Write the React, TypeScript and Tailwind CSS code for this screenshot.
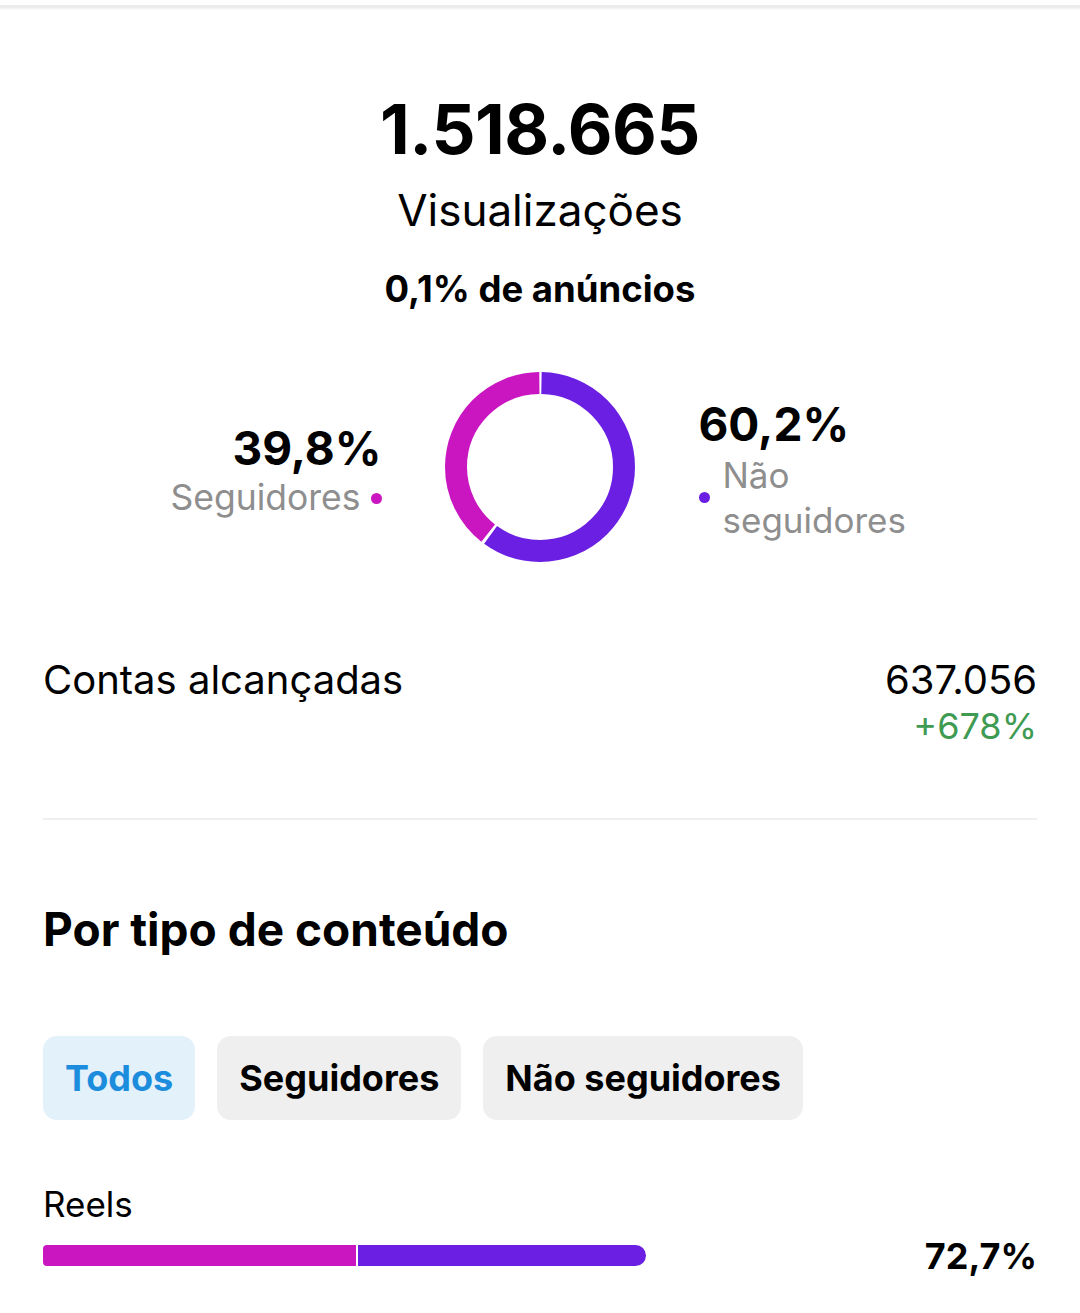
import React from 'react';

const MAGENTA = '#c916c0';
const PURPLE = '#6b1fe2';

function Donut({ followers }: { followers: number }) {
  const r = 84;
  const c = 2 * Math.PI * r;
  const gap = 3;
  const purpleLen = (1 - followers) * c;
  const magentaLen = followers * c;
  return (
    <svg width="192" height="192" viewBox="0 0 192 192" className="shrink-0">
      <g transform="rotate(-90 96 96)">
        <circle
          cx="96"
          cy="96"
          r={r}
          fill="none"
          stroke={PURPLE}
          strokeWidth="22"
          strokeDasharray={`${purpleLen - gap} ${c}`}
          strokeDashoffset={-gap / 2}
        />
        <circle
          cx="96"
          cy="96"
          r={r}
          fill="none"
          stroke={MAGENTA}
          strokeWidth="22"
          strokeDasharray={`${magentaLen - gap} ${c}`}
          strokeDashoffset={-(purpleLen + gap / 2)}
        />
      </g>
    </svg>
  );
}

const TABS = ['Todos', 'Seguidores', 'Não seguidores'];

export default function App() {
  return (
    <div className="w-[1080px] min-h-[1313px] bg-white text-black font-['Inter',sans-serif] overflow-hidden">
      <div className="mt-[5px] h-[3px] bg-[#ececec] shadow-[0_1px_2px_rgba(0,0,0,0.06)]" />

      <div className="px-[43px]">
        {/* Header */}
        <div className="flex flex-col items-center">
          <div className="mt-[87px] text-[69px] font-bold leading-none tracking-[-0.5px]">1.518.665</div>
          <div className="mt-[24px] text-[44px] leading-none">Visualizações</div>
          <div className="mt-[39px] text-[36.5px] font-bold leading-none">0,1% de anúncios</div>
        </div>

        {/* Followers split */}
        <div className="mt-[63px] flex items-center">
          <div className="flex-1 flex justify-end pr-[62px]">
            <div className="flex flex-col items-end pt-[8px]">
              <div className="text-[46px] font-bold leading-none">39,8%</div>
              <div className="mt-[9px] flex items-center gap-[10px]">
                <span className="text-[35.5px] leading-none text-[#8e8e8e]">Seguidores</span>
                <span className="w-[11px] h-[11px] rounded-full bg-[#c916c0]" />
              </div>
            </div>
          </div>
          <Donut followers={0.398} />
          <div className="flex-1 flex justify-start pl-[63px]">
            <div className="flex flex-col items-start pt-[10px]">
              <div className="text-[46px] font-bold leading-none">60,2%</div>
              <div className="mt-[6px] flex items-center gap-[13px]">
                <span className="w-[11px] h-[11px] rounded-full bg-[#6b1fe2]" />
                <span className="text-[35px] leading-[45px] text-[#8e8e8e]">
                  Não
                  <br />
                  seguidores
                </span>
              </div>
            </div>
          </div>
        </div>

        {/* Reached accounts */}
        <div className="mt-[97px] flex justify-between items-start">
          <div className="text-[40px] leading-none">Contas alcançadas</div>
          <div className="flex flex-col items-end">
            <div className="text-[40px] leading-none">637.056</div>
            <div className="mt-[8px] text-[36px] leading-none text-[#3f9a52]">+678%</div>
          </div>
        </div>

        <div className="mt-[74px] h-[2px] bg-[#efefef]" />

        {/* By content type */}
        <div className="mt-[86px] text-[46px] font-bold leading-none">Por tipo de conteúdo</div>

        <div className="mt-[84px] flex gap-[22px]">
          {TABS.map((t, i) => (
            <button
              key={t}
              className={`h-[84px] px-[22px] rounded-[14px] text-[36px] font-bold leading-none ${
                i === 0 ? 'bg-[#e3f1fb] text-[#1b8ddc]' : 'bg-[#efefef] text-black'
              }`}
            >
              {t}
            </button>
          ))}
        </div>

        <div className="mt-[67px] text-[35px] leading-none">Reels</div>
        <div className="mt-[16px] flex items-center justify-between">
          <div className="w-[603px] h-[21px] flex">
            <div className="w-[313px] h-full bg-[#c916c0] rounded-l-[4px]" />
            <div className="w-[2px] h-full bg-white" />
            <div className="flex-1 h-full bg-[#6b1fe2] rounded-r-full" />
          </div>
          <div className="text-[36px] font-bold leading-none">72,7%</div>
        </div>
      </div>
    </div>
  );
}
